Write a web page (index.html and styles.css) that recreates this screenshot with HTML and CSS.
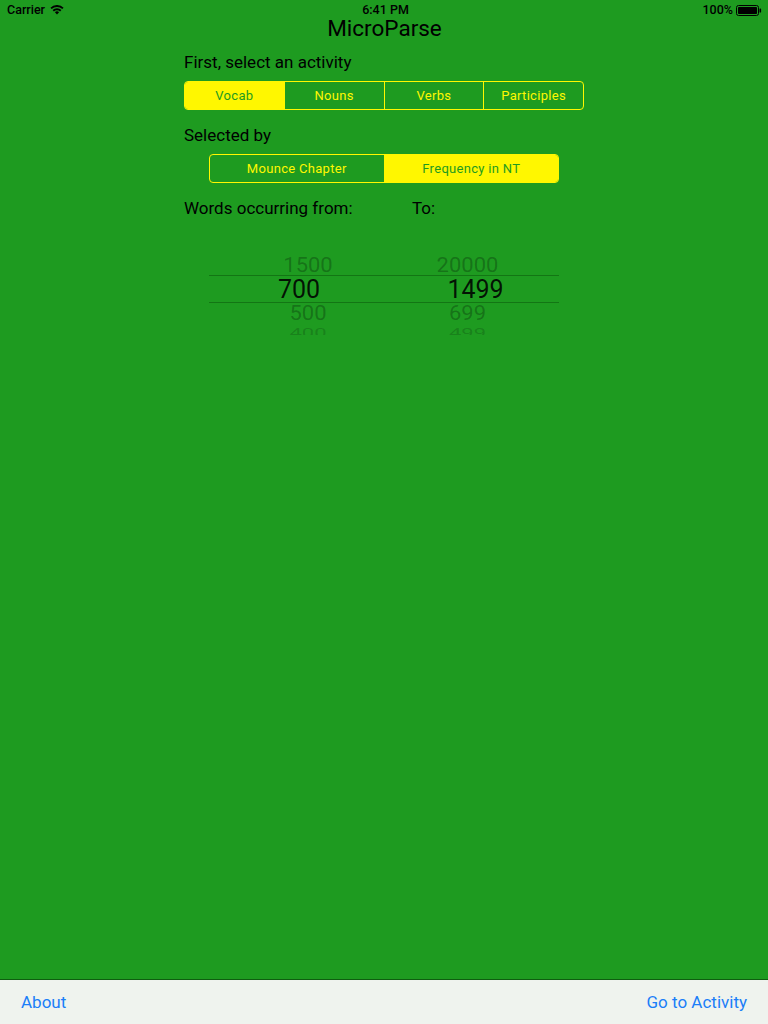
FILE: index.html
```html
<!DOCTYPE html>
<html>
<head>
<meta charset="utf-8">
<link rel="stylesheet" href="styles.css">
</head>
<body>
<div class="screen">
  <div class="statusbar">
    <div class="sb-left">Carrier
      <svg class="wifi" width="14" height="10" viewBox="0 0 14 10">
        <path d="M7 9.6 L4.9 7.3 A3 3 0 0 1 9.1 7.3 Z" fill="#000"/>
        <path d="M2.6 5.1 A6.2 6.2 0 0 1 11.4 5.1 L10.1 6.5 A4.3 4.3 0 0 0 3.9 6.5 Z" fill="#000"/>
        <path d="M0.4 2.7 A9.4 9.4 0 0 1 13.6 2.7 L12.3 4.1 A7.5 7.5 0 0 0 1.7 4.1 Z" fill="#000"/>
      </svg>
    </div>
    <div class="sb-center">6:41 PM</div>
    <div class="sb-right">100%
      <svg class="battery" width="26" height="11" viewBox="0 0 26 11">
        <rect x="0.5" y="0.5" width="22" height="10" rx="2" fill="none" stroke="#000" stroke-width="1"/>
        <rect x="2" y="2" width="19" height="7" rx="0.8" fill="#000"/>
        <rect x="23.5" y="3.5" width="1.6" height="4" rx="0.6" fill="#000"/>
      </svg>
    </div>
  </div>
  <div class="title">MicroParse</div>
  <main class="content">
    <div class="label">First, select an activity</div>
    <div class="seg seg4">
      <div class="seg-item on">Vocab</div>
      <div class="seg-item">Nouns</div>
      <div class="seg-item">Verbs</div>
      <div class="seg-item">Participles</div>
    </div>
    <div class="label label2">Selected by</div>
    <div class="seg seg2">
      <div class="seg-item">Mounce Chapter</div>
      <div class="seg-item on">Frequency in NT</div>
    </div>
    <div class="label label3"><span class="from">Words occurring from:</span><span>To:</span></div>
    <div class="picker">
      <div class="sel-line top"></div>
      <div class="sel-line bottom"></div>
      <div class="col col1">
        <div class="n f1">1500</div>
        <div class="n cur">700</div>
        <div class="n f1">500</div>
        <div class="n f2">400</div>
      </div>
      <div class="col col2">
        <div class="n f1">20000</div>
        <div class="n cur">1499</div>
        <div class="n f1">699</div>
        <div class="n f2">499</div>
      </div>
    </div>
  </main>
  <div class="toolbar">
    <span class="tb-btn">About</span>
    <span class="tb-btn">Go to Activity</span>
  </div>
</div>
</body>
</html>
```
FILE: styles.css
```css
* { box-sizing: border-box; }
html, body { margin: 0; padding: 0; }
body {
  width: 768px;
  height: 1024px;
  overflow: hidden;
  font-family: Roboto, "Liberation Sans", sans-serif;
  background: #1e9b20;
  color: #000;
}
.screen {
  width: 768px;
  height: 1024px;
  display: flex;
  flex-direction: column;
}
.statusbar {
  height: 20px;
  flex: none;
  display: grid;
  grid-template-columns: 1fr auto 1fr;
  align-items: center;
  padding: 0 6px 0 7px;
  font-size: 12.5px;
  line-height: 14px;
  font-weight: 500;
}
.sb-left { display: flex; align-items: center; gap: 5px; }
.wifi { margin-top: -1px; }
.sb-center { text-align: center; padding-left: 2px; }
.sb-right { display: flex; justify-content: flex-end; align-items: center; gap: 3px; }
.title {
  flex: none;
  text-align: center;
  font-size: 22.5px;
  line-height: 22px;
  height: 22px;
  margin-top: -3px;
  margin-left: 1px;
}
.content {
  flex: 1;
  width: 400px;
  margin-left: 184px;
  display: flex;
  flex-direction: column;
}
.label {
  font-size: 17px;
  line-height: 20px;
  margin-top: 13px;
}
.label2 { margin-top: 15px; }
.label3 { margin-top: 15px; display: flex; }
.from { width: 228px; }
.seg {
  display: flex;
  border: 1px solid #fff700;
  border-radius: 4px;
  height: 29px;
  overflow: hidden;
}
.seg4 { width: 400px; margin-top: 9px; }
.seg2 { width: 350px; margin-left: 25px; margin-top: 9px; }
.seg-item {
  flex: 1;
  display: flex;
  align-items: center;
  justify-content: center;
  font-size: 13px;
  letter-spacing: 0.3px;
  color: #fff700;
  border-left: 1px solid #fff700;
}
.seg-item:first-child { border-left: none; }
.seg-item.on {
  background: #fff700;
  color: #1e9b20;
}
.picker {
  position: relative;
  width: 350px;
  margin-left: 25px;
  margin-top: 33px;
  height: 84px;
  overflow: hidden;
  display: flex;
}
.sel-line {
  position: absolute;
  left: 0;
  right: 0;
  height: 1px;
  background: #137614;
}
.sel-line.top { top: 24px; }
.sel-line.bottom { top: 51px; }
.col {
  display: flex;
  flex-direction: column;
  align-items: center;
  width: 175px;
  padding-top: 3px;
}
.n {
  font-size: 22px;
  line-height: 23px;
  color: rgba(0, 0, 0, 0.27);
  transform: scaleY(0.88);
}
.col1 .n { margin-left: 23px; }
.col2 { margin-left: -4px; }
.n.cur {
  font-size: 25px;
  line-height: 25px;
  color: rgba(0, 0, 0, 0.88);
  transform: none;
}
.col1 .n.cur { margin-left: 5px; }
.col2 .n.cur { margin-left: 16px; }
.n.f2 {
  line-height: 17px;
  transform: scaleY(0.6);
  color: rgba(0, 0, 0, 0.18);
  margin-top: -1px;
}
.toolbar {
  height: 45px;
  flex: none;
  background: #eff3ee;
  border-top: 1px solid #0f5e10;
  display: flex;
  justify-content: space-between;
  align-items: center;
  padding: 0 21px 0 21px;
  font-size: 17px;
  color: #1b7ef8;
}
```
